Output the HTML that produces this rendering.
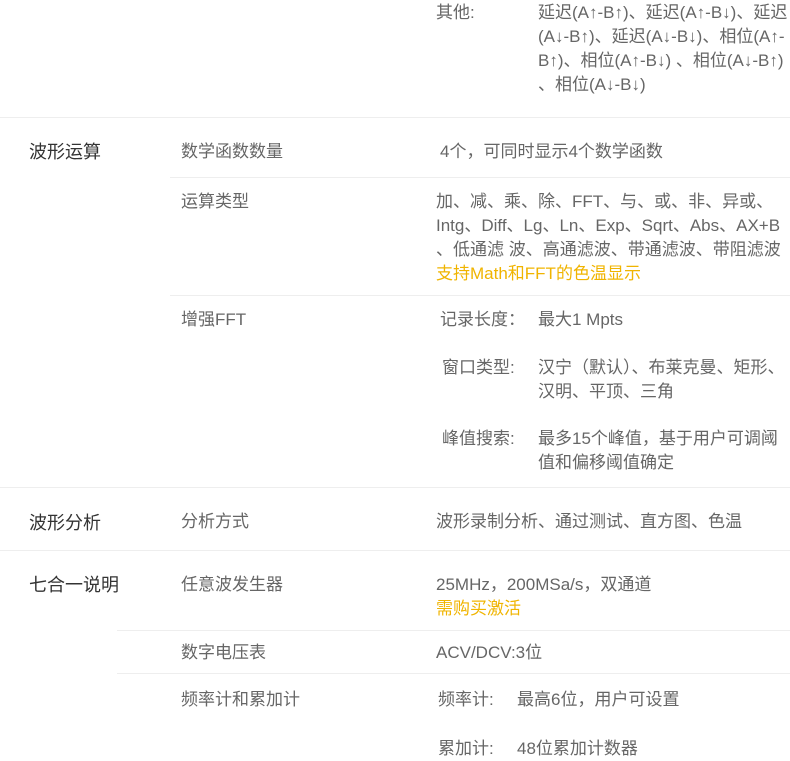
<!DOCTYPE html>
<html><head><meta charset="utf-8"><style>
body{margin:0;width:790px;height:741px;overflow:hidden;background:#fff;font-family:"Liberation Sans","Noto Sans CJK SC",sans-serif;font-size:17px;color:#666;position:relative}
div{position:absolute;white-space:nowrap;line-height:24px}
.h{color:#333;font-size:18px}
.y{color:#f0b400}
.l{height:1px;background:#eee;right:0}
</style></head><body>
<div style="left:436px;top:1px">其他:</div>
<div style="left:538px;top:1px">延迟(A↑-B↑)、延迟(A↑-B↓)、延迟<br>(A↓-B↑)、延迟(A↓-B↓)、相位(A↑-<br>B↑)、相位(A↑-B↓) 、相位(A↓-B↑)<br>、相位(A↓-B↓)</div>
<div class="l" style="left:0;top:117px"></div>
<div class="h" style="left:29px;top:140px">波形运算</div>
<div style="left:181px;top:140px">数学函数数量</div>
<div style="left:440px;top:140px">4个，可同时显示4个数学函数</div>
<div class="l" style="left:170px;top:177px"></div>
<div style="left:181px;top:190px">运算类型</div>
<div style="left:436px;top:190px">加、减、乘、除、FFT、与、或、非、异或、<br>Intg、Diff、Lg、Ln、Exp、Sqrt、Abs、AX+B<br>、低通滤 波、高通滤波、带通滤波、带阻滤波<br><span class="y">支持Math和FFT的色温显示</span></div>
<div class="l" style="left:170px;top:295px"></div>
<div style="left:181px;top:308px">增强FFT</div>
<div style="left:440px;top:308px">记录长度：</div>
<div style="left:538px;top:308px">最大1 Mpts</div>
<div style="left:442px;top:356px">窗口类型:</div>
<div style="left:538px;top:356px">汉宁（默认）、布莱克曼、矩形、<br>汉明、平顶、三角</div>
<div style="left:442px;top:427px">峰值搜索:</div>
<div style="left:538px;top:427px">最多15个峰值，基于用户可调阈<br>值和偏移阈值确定</div>
<div class="l" style="left:0;top:487px"></div>
<div class="h" style="left:29px;top:511px">波形分析</div>
<div style="left:181px;top:510px">分析方式</div>
<div style="left:436px;top:510px">波形录制分析、通过测试、直方图、色温</div>
<div class="l" style="left:0;top:550px"></div>
<div class="h" style="left:29px;top:573px">七合一说明</div>
<div style="left:181px;top:573px">任意波发生器</div>
<div style="left:436px;top:573px">25MHz，200MSa/s，双通道<br><span class="y">需购买激活</span></div>
<div class="l" style="left:117px;top:630px"></div>
<div style="left:181px;top:641px">数字电压表</div>
<div style="left:436px;top:641px">ACV/DCV:3位</div>
<div class="l" style="left:117px;top:673px"></div>
<div style="left:181px;top:688px">频率计和累加计</div>
<div style="left:438px;top:688px">频率计:</div>
<div style="left:517px;top:688px">最高6位，用户可设置</div>
<div style="left:438px;top:737px">累加计:</div>
<div style="left:517px;top:737px">48位累加计数器</div>
</body></html>
